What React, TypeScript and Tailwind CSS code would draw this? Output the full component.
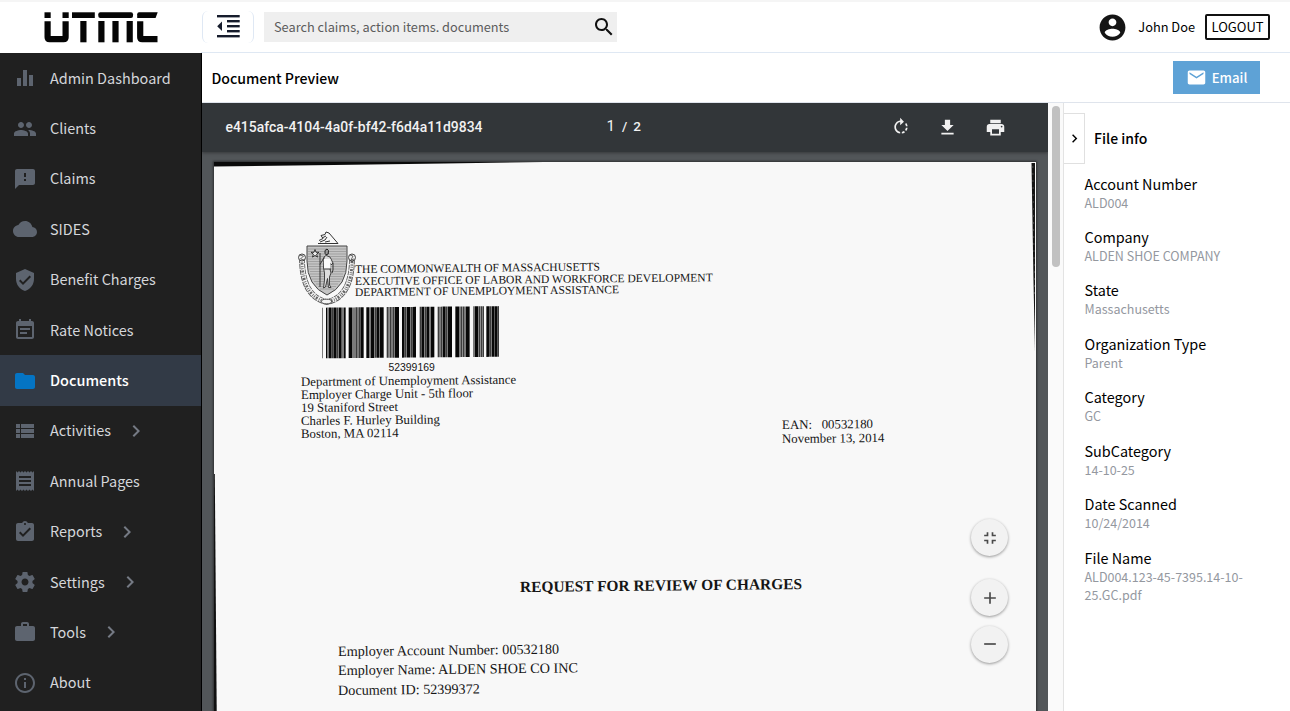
import React from 'react';

const ICONS = {
  bars: 'M10 20h4V4h-4v16zm-6 0h4v-8H4v8zM16 9v11h4V9h-4z',
  people:
    'M16 11c1.66 0 2.99-1.34 2.99-3S17.66 5 16 5c-1.66 0-3 1.34-3 3s1.34 3 3 3zm-8 0c1.66 0 2.99-1.34 2.99-3S9.66 5 8 5C6.34 5 5 6.34 5 8s1.34 3 3 3zm0 2c-2.33 0-7 1.17-7 3.5V19h14v-2.5c0-2.33-4.67-3.5-7-3.5zm8 0c-.29 0-.62.02-.97.05 1.16.84 1.97 1.97 1.97 3.45V19h6v-2.5c0-2.33-4.67-3.5-7-3.5z',
  feedback: 'M20 2H4c-1.1 0-1.99.9-1.99 2L2 22l4-4h14c1.1 0 2-.9 2-2V4c0-1.1-.9-2-2-2zm-7 12h-2v-2h2v2zm0-4h-2V6h2v4z',
  cloud: 'M19.35 10.04C18.67 6.59 15.64 4 12 4 9.11 4 6.6 5.64 5.35 8.04 2.34 8.36 0 10.91 0 14c0 3.31 2.69 6 6 6h13c2.76 0 5-2.24 5-5 0-2.64-2.05-4.78-4.65-4.96z',
  shield: 'M12 1L3 5v6c0 5.55 3.84 10.74 9 12 5.16-1.26 9-6.45 9-12V5l-9-4zm-2 16l-4-4 1.41-1.41L10 14.17l6.59-6.59L18 9l-8 8z',
  note: 'M17 10H7v2h10v-2zm2-7h-1V1h-2v2H8V1H6v2H5c-1.11 0-1.99.9-1.99 2L3 19c0 1.1.89 2 2 2h14c1.1 0 2-.9 2-2V5c0-1.1-.9-2-2-2zm0 16H5V8h14v11zm-5-5H7v2h7v-2z',
  folder: 'M10 4H4c-1.1 0-1.99.9-1.99 2L2 18c0 1.1.9 2 2 2h16c1.1 0 2-.9 2-2V8c0-1.1-.9-2-2-2h-8l-2-2z',
  list: 'M3 9h4V5H3v4zm0 5h4v-4H3v4zm0 5h4v-4H3v4zm5 0h13v-4H8v4zm0-5h13v-4H8v4zM8 5v4h13V5H8z',
  receipt: 'M18 17H6v-2h12v2zm0-4H6v-2h12v2zm0-4H6V7h12v2zM3 22l1.5-1.5L6 22l1.5-1.5L9 22l1.5-1.5L12 22l1.5-1.5L15 22l1.5-1.5L18 22l1.5-1.5L21 22V2l-1.5 1.5L18 2l-1.5 1.5L15 2l-1.5 1.5L12 2l-1.5 1.5L9 2 7.5 3.5 6 2 4.5 3.5 3 2v20z',
  clipboard:
    'M19 3h-4.18C14.4 1.84 13.3 1 12 1c-1.3 0-2.4.84-2.82 2H5c-1.1 0-2 .9-2 2v14c0 1.1.9 2 2 2h14c1.1 0 2-.9 2-2V5c0-1.1-.9-2-2-2zm-7 0c.55 0 1 .45 1 1s-.45 1-1 1-1-.45-1-1 .45-1 1-1zm-2 14l-4-4 1.41-1.41L10 14.17l6.59-6.59L18 9l-8 8z',
  gear: 'M19.43 12.98c.04-.32.07-.64.07-.98s-.03-.66-.07-.98l2.11-1.65c.19-.15.24-.42.12-.64l-2-3.46c-.12-.22-.39-.3-.61-.22l-2.49 1c-.52-.4-1.08-.73-1.69-.98l-.38-2.65C14.46 2.18 14.25 2 14 2h-4c-.25 0-.46.18-.49.42l-.38 2.65c-.61.25-1.17.59-1.69.98l-2.49-1c-.23-.09-.49 0-.61.22l-2 3.46c-.13.22-.07.49.12.64l2.11 1.65c-.04.32-.07.65-.07.98s.03.66.07.98l-2.11 1.65c-.19.15-.24.42-.12.64l2 3.46c.12.22.39.3.61.22l2.49-1c.52.4 1.08.73 1.69.98l.38 2.65c.03.24.24.42.49.42h4c.25 0 .46-.18.49-.42l.38-2.65c.61-.25 1.17-.59 1.69-.98l2.49 1c.23.09.49 0 .61-.22l2-3.46c.12-.22.07-.49-.12-.64l-2.11-1.65zM12 15.5c-1.93 0-3.5-1.57-3.5-3.5s1.57-3.5 3.5-3.5 3.5 1.57 3.5 3.5-1.57 3.5-3.5 3.5z',
  work: 'M20 6h-4V4c0-1.11-.89-2-2-2h-4c-1.11 0-2 .89-2 2v2H4c-1.11 0-1.99.89-1.99 2L2 19c0 1.11.89 2 2 2h16c1.11 0 2-.89 2-2V8c0-1.11-.89-2-2-2zm-6 0h-4V4h4v2z',
  info: 'M11 17h2v-6h-2v6zm1-15C6.48 2 2 6.48 2 12s4.48 10 10 10 10-4.48 10-10S17.52 2 12 2zm0 18c-4.41 0-8-3.59-8-8s3.59-8 8-8 8 3.59 8 8-3.59 8-8 8zM11 9h2V7h-2v2z',
  chevron: 'M10 6L8.59 7.41 13.17 12l-4.58 4.59L10 18l6-6z',
  search:
    'M15.5 14h-.79l-.28-.27C15.41 12.59 16 11.11 16 9.5 16 5.91 13.09 3 9.5 3S3 5.91 3 9.5 5.91 16 9.5 16c1.61 0 3.09-.59 4.23-1.57l.27.28v.79l5 4.99L20.49 19l-4.99-5zm-6 0C7.01 14 5 11.99 5 9.5S7.01 5 9.5 5 14 7.01 14 9.5 11.99 14 9.5 14z',
  account:
    'M12 2C6.48 2 2 6.48 2 12s4.48 10 10 10 10-4.48 10-10S17.52 2 12 2zm0 3c1.66 0 3 1.34 3 3s-1.34 3-3 3-3-1.34-3-3 1.34-3 3-3zm0 14.2c-2.5 0-4.71-1.28-6-3.22.03-1.99 4-3.08 6-3.08 1.99 0 5.97 1.09 6 3.08-1.29 1.94-3.5 3.22-6 3.22z',
  mail: 'M20 4H4c-1.1 0-1.99.9-1.99 2L2 18c0 1.1.9 2 2 2h16c1.1 0 2-.9 2-2V6c0-1.1-.9-2-2-2zm0 4l-8 5-8-5V6l8 5 8-5v2z',
  rotate:
    'M15.55 5.55L11 1v3.07C7.06 4.56 4 7.92 4 12s3.05 7.44 7 7.93v-2.02c-2.84-.48-5-2.94-5-5.91s2.16-5.43 5-5.91V10l4.55-4.45zM19.93 11c-.17-1.39-.72-2.73-1.62-3.89l-1.42 1.42c.54.75.88 1.6 1.02 2.47h2.02zM13 17.9v2.02c1.39-.17 2.74-.71 3.9-1.61l-1.44-1.44c-.75.54-1.59.89-2.46 1.03zm3.89-2.42l1.42 1.41c.9-1.16 1.45-2.5 1.62-3.89h-2.02c-.14.87-.48 1.72-1.02 2.48z',
  download: 'M19 9h-4V3H9v6H5l7 7 7-7zM5 18v2h14v-2H5z',
  print: 'M19 8H5c-1.66 0-3 1.34-3 3v6h4v4h12v-4h4v-6c0-1.66-1.34-3-3-3zm-3 11H8v-5h8v5zm3-7c-.55 0-1-.45-1-1s.45-1 1-1 1 .45 1 1-.45 1-1 1zm-1-9H6v4h12V3z',
  fit: 'M5 16h3v3h2v-5H5v2zm3-8H5v2h5V5H8v3zm6 11h2v-3h3v-2h-5v5zm2-11V5h-2v5h5V8h-3z',
  plus: 'M19 13h-6v6h-2v-6H5v-2h6V5h2v6h6v2z',
  minus: 'M19 13H5v-2h14v2z',
};

type IconName = keyof typeof ICONS;

function Icon({ name, className }: { name: IconName; className: string }) {
  return (
    <svg viewBox="0 0 24 24" fill="currentColor" className={`shrink-0 ${className}`} aria-hidden="true">
      <path d={ICONS[name]} />
    </svg>
  );
}

const NAV: { label: string; icon: IconName; more?: boolean; active?: boolean }[] = [
  { label: 'Admin Dashboard', icon: 'bars' },
  { label: 'Clients', icon: 'people' },
  { label: 'Claims', icon: 'feedback' },
  { label: 'SIDES', icon: 'cloud' },
  { label: 'Benefit Charges', icon: 'shield' },
  { label: 'Rate Notices', icon: 'note' },
  { label: 'Documents', icon: 'folder', active: true },
  { label: 'Activities', icon: 'list', more: true },
  { label: 'Annual Pages', icon: 'receipt' },
  { label: 'Reports', icon: 'clipboard', more: true },
  { label: 'Settings', icon: 'gear', more: true },
  { label: 'Tools', icon: 'work', more: true },
  { label: 'About', icon: 'info' },
];

const FILE_INFO = [
  ['Account Number', 'ALD004'],
  ['Company', 'ALDEN SHOE COMPANY'],
  ['State', 'Massachusetts'],
  ['Organization Type', 'Parent'],
  ['Category', 'GC'],
  ['SubCategory', '14-10-25'],
  ['Date Scanned', '10/24/2014'],
  ['File Name', 'ALD004.123-45-7395.14-10-25.GC.pdf'],
];

function Logo() {
  return (
    <svg viewBox="0 0 114 31" className="h-[31px] w-[114px]" role="img" aria-label="UTMC">
      <g fill="#050505">
        <rect x="0.5" y="0.3" width="6.2" height="5.7" />
        <rect x="18.5" y="0.3" width="6.2" height="5.7" />
        <rect x="28" y="0.3" width="22.8" height="5.7" />
        <rect x="36.3" y="9" width="6.2" height="21.3" />
        <rect x="54.3" y="0.3" width="34.7" height="5.7" rx="2" />
        <rect x="54.3" y="9" width="6.2" height="21.3" />
        <rect x="68.4" y="9" width="6.2" height="21.3" />
        <rect x="82.6" y="9" width="6.2" height="21.3" />
      </g>
      <path d="M3.6 9.3V25.2Q3.6 27.2 5.6 27.2H19.6Q21.6 27.2 21.6 25.2V9.3" fill="none" stroke="#050505" strokeWidth="6.2" />
      <path d="M96.2 9.3V25.2Q96.2 27.2 98.2 27.2H113.5" fill="none" stroke="#050505" strokeWidth="6.2" />
      <path d="M95 .3H113.7L111.6 6H93.2V2.3Q93.4 .3 95 .3Z" fill="#050505" />
    </svg>
  );
}

function OutdentIcon() {
  return (
    <svg viewBox="0 0 23 23" className="h-[23px] w-[23px]" fill="#161c2c" aria-hidden="true">
      <rect y="0" width="22.7" height="2.4" />
      <rect x="10" y="5" width="12.7" height="2.4" />
      <rect x="10" y="10" width="12.7" height="2.4" />
      <rect x="10" y="15" width="12.7" height="2.4" />
      <rect y="20" width="22.7" height="2.4" />
      <path d="M5 6.6V16L.2 11.3Z" />
    </svg>
  );
}

function Seal() {
  return (
    <svg viewBox="0 0 58 74" className="h-[74px] w-[58px] shrink-0" fill="none" stroke="#333" aria-hidden="true">
      <path d="M20 12.5h20M21 9.5l4-2-2-3 4-1 1-2.5 3 1 9 10.500M22 11l5-2 2-3M27 11l5-1M24 7l4-2" strokeWidth="1" />
      <path d="M4 27Q4 66 29 71Q54 66 54 27" stroke="#5a5a5a" strokeWidth="5.800" strokeDasharray="5 0.800" />
      <path d="M4 27Q4 66 29 71Q54 66 54 27" stroke="#f3f3f3" strokeWidth="4" />
      <path d="M4 29Q4 66 29 71Q54 66 54 29" stroke="#666" strokeWidth="2.800" strokeDasharray="1 1.300 2 1.500 0.800 1.200" />
      <circle cx="4" cy="26.500" r="3.500" fill="#eee" strokeWidth="0.900" />
      <path d="M1.500 24l4 1-3 3 4 1" strokeWidth="0.700" />
      <circle cx="54" cy="26.500" r="3.500" fill="#eee" strokeWidth="0.900" />
      <path d="M52 24l3 1-2 4 3-1" strokeWidth="0.700" />
      <ellipse cx="28.500" cy="70.500" rx="5" ry="2.300" fill="#f4f4f4" strokeWidth="0.800" />
      <path d="M9 15H49V30Q49 55 29 64Q9 55 9 30Z" fill="#c4c4c4" stroke="#444" strokeWidth="1" />
      <path
        d="M10 18h38M10 20.500h38M10 23h38M10 25.500h38M10 28h38M10 30.500h38M10 33h38M10 35.500h38M11 38h36M12 40.500h35M12 43h33M13 45.500h32M14 48h30M16 50.500h26M18 53h22M20 55.500h18M22 58h14"
        stroke="#929292"
        strokeWidth="0.700"
      />
      <path d="M17 18.500l1 2.800h3l-2.400 1.900.9 2.900-2.500-1.700-2.500 1.700.9-2.900L13 21.300h3z" fill="#eee" stroke="#222" strokeWidth="0.900" />
      <path d="M27 19.500l2-1.500 1.500 1.500-.3 3.500-2.200.800-1-1.500z" fill="#999" stroke="#222" strokeWidth="1" />
      <path d="M26 26l2-1.500 4 1.500 3 6-2 2-1-2v6l1 4-1.500 4v8l1.500 2.500h-2.500l-1-9-2 8.500-2 1 1-8v-7l-1-5z" fill="#ddd" stroke="#333" strokeWidth="0.900" />
      <path d="M26 28h6.500v10H26z" fill="#fafafa" stroke="none" />
      <path d="M22 22v34M26 26.500l-4 7M35 32v7l-1 3M26 38h7" stroke="#333" strokeWidth="1" />
    </svg>
  );
}

/* Each entry is [left, width, shade], in thirds of a pixel. */
const BARS: [number, number, 0 | 1][] = [
  [0, 2, 1], [12, 4, 0], [17, 3, 1], [21, 8, 0], [30, 3, 1], [34, 10, 0], [45, 4, 1], [50, 9, 0], [61, 4, 1], [66, 5, 0],
  [80, 10, 0], [91, 4, 1], [97, 4, 1], [102, 3, 1], [106, 4, 1], [111, 3, 1], [115, 10, 0],
  [133, 8, 0], [142, 4, 1], [147, 10, 0], [158, 4, 1], [163, 9, 0], [173, 12, 0],
  [194, 4, 1], [199, 3, 1], [203, 4, 1], [208, 4, 1], [213, 4, 1], [218, 13, 0],
  [240, 8, 0], [249, 4, 1], [254, 10, 0], [265, 5, 1], [271, 11, 0],
  [293, 4, 1], [298, 9, 0], [308, 4, 1], [313, 8, 0], [322, 4, 1], [327, 10, 0],
  [347, 4, 1], [352, 4, 1], [357, 4, 1], [362, 9, 0], [372, 5, 1], [378, 12, 0],
  [400, 11, 0], [412, 4, 1], [417, 4, 1], [422, 4, 1], [427, 4, 1], [432, 11, 0],
  [454, 4, 1], [459, 10, 0], [470, 5, 1], [476, 4, 1], [481, 5, 1],
  [493, 10, 0], [504, 4, 1], [509, 9, 0], [519, 8, 0], [528, 3, 1],
];

function Barcode() {
  return (
    <svg viewBox="0 0 534 159" className="h-[53px] w-[178px]" preserveAspectRatio="none" role="img" aria-label="Barcode">
      <g transform="skewY(-0.5)">
        {BARS.map(([x, w, shade]) => (
          <rect key={x} x={x} y={5} width={w} height={152} fill={shade ? '#3c3c3c' : '#080808'} />
        ))}
      </g>
    </svg>
  );
}

function Line({ children, className = '' }: { children: React.ReactNode; className?: string }) {
  return <p className={`w-max origin-left rotate-[-0.6deg] whitespace-pre ${className}`}>{children}</p>;
}

function ScannedPage() {
  return (
    <div className="relative h-[560px] w-[822px] overflow-hidden bg-[#f8f8f8] font-['Liberation_Serif',serif] text-[#151515]">
      <svg className="absolute inset-0 h-[560px] w-[822px]" viewBox="0 0 822 560" aria-hidden="true">
        <path d="M0 0H330L230 1.500L120 3L0 4.600Z" fill="#0a0a0a" />
        <path d="M817.500 1H821V190L819.500 120Z" fill="#141414" />
        <path d="M818.800 4l.9 70 .9 60" stroke="#777" strokeWidth="0.500" strokeDasharray="2 5" fill="none" />
        <path d="M0 312H.8L2.800 560H0Z" fill="#111" />
      </svg>
      <div className="relative pt-[69px]">
        <div className="ml-[84px] flex h-[75px] items-start">
          <Seal />
          <div className="-ml-[1.5px] mt-[33px] text-[11.55px] leading-[11.7px]">
            <Line>THE COMMONWEALTH OF MASSACHUSETTS</Line>
            <Line>EXECUTIVE OFFICE OF LABOR AND WORKFORCE DEVELOPMENT</Line>
            <Line>DEPARTMENT OF UNEMPLOYMENT ASSISTANCE</Line>
          </div>
        </div>
        <div className="ml-[108px] h-[53px]">
          <Barcode />
        </div>
        <p className="ml-[174.5px] h-[17px] pt-[2px] font-['Liberation_Sans',sans-serif] text-[10.4px] leading-[14px]">52399169</p>
        <div className="ml-[87px] mt-[-1px] flex h-[70px] items-start text-[12.85px]">
          <div className="w-[480.5px] pt-px leading-[12.9px]">
            <Line>Department of Unemployment Assistance</Line>
            <Line>Employer Charge Unit - 5th floor</Line>
            <Line>19 Staniford Street</Line>
            <Line>Charles F. Hurley Building</Line>
            <Line>Boston, MA 02114</Line>
          </div>
          <div className="pt-[43px] leading-[14px]">
            <Line>EAN:   00532180</Line>
            <Line>November 13, 2014</Line>
          </div>
        </div>
        <Line className="ml-[306px] mt-[132px] text-[15.4px] leading-[20px] font-bold">REQUEST FOR REVIEW OF CHARGES</Line>
        <div className="ml-[124px] mt-[45px] text-[14.2px] leading-[19.3px]">
          <Line>Employer Account Number: 00532180</Line>
          <Line>Employer Name: ALDEN SHOE CO INC</Line>
          <Line>Document ID: 52399372</Line>
        </div>
      </div>
    </div>
  );
}

function RoundButton({ icon, label }: { icon: IconName; label: string }) {
  return (
    <button
      aria-label={label}
      className="flex h-[37px] w-[37px] items-center justify-center rounded-full bg-[#f2f2f2] text-[#4a4a4a] shadow-[0_1px_3px_rgba(0,0,0,0.4)]"
    >
      <Icon name={icon} className="h-[20px] w-[20px]" />
    </button>
  );
}

function Viewer() {
  return (
    <section className="relative flex h-[608px] w-[846px] shrink-0 flex-col overflow-hidden bg-[#525659]">
      <div className="z-10 flex h-[49px] w-full shrink-0 items-center bg-[#323639] pl-[23.5px] font-['Roboto',sans-serif] text-[#f1f1f1] shadow-[0_1px_3px_rgba(0,0,0,0.35)]">
        <span className="w-[381px] text-[13.93px] font-medium">e415afca-4104-4a0f-bf42-f6d4a11d9834</span>
        <span className="flex w-[284px] items-baseline pb-[2px] text-[13.5px] font-medium">
          <span className="mr-[7px] text-[15px] font-normal">1</span>
          <span className="mr-[6px]">/</span>
          <span>2</span>
        </span>
        <span className="flex gap-[26.500px] pb-px">
          <Icon name="rotate" className="h-[20px] w-[20px]" />
          <Icon name="download" className="h-[21px] w-[21px]" />
          <Icon name="print" className="h-[21px] w-[21px]" />
        </span>
      </div>
      <div className="ml-[12px] mt-[10px] w-[822px] shadow-[0_0_2px_1px_rgba(0,0,0,0.45)]">
        <ScannedPage />
      </div>
      <div className="absolute top-[416px] left-[769px] z-10 flex flex-col">
        <RoundButton icon="fit" label="Fit to page" />
        <div className="mt-[23px] flex flex-col gap-[9.500px]">
          <RoundButton icon="plus" label="Zoom in" />
          <RoundButton icon="minus" label="Zoom out" />
        </div>
      </div>
    </section>
  );
}

export default function App() {
  return (
    <div className="flex h-[711px] w-[1290px] flex-col overflow-hidden bg-white font-['Noto_Sans_CJK_SC',sans-serif] text-[#111]">
      <header className="flex h-[53px] shrink-0 border-t-2 border-[#f5f5f5]">
        <div className="flex w-[201px] justify-center pt-[9.500px]">
          <Logo />
        </div>
        <div className="flex flex-1 border-b border-[#dfe8f3]">
          <div className="ml-px mt-[9px] flex h-[32px] w-[52px] justify-center rounded-md border-x border-[#dfe8f4] pt-[4px]">
            <OutdentIcon />
          </div>
          <div className="ml-[10px] mt-[10px] flex h-[30px] w-[353px] items-center justify-between bg-[#efefef] pl-[10px] pr-px">
            <span className="text-[12.75px] leading-[20px] text-[#5c5c5c]">Search claims, action items. documents</span>
            <Icon name="search" className="h-[24px] w-[24px] text-[#111]" />
          </div>
          <div className="ml-auto mr-[20px] flex h-[50px] items-center">
            <Icon name="account" className="h-[31px] w-[31px] text-[#151515]" />
            <span className="ml-[10px] text-[12.8px] leading-[20px] text-black">John Doe</span>
            <button className="ml-[10px] flex h-[26px] w-[65px] items-center justify-center rounded-[2px] border-2 border-[#111] text-[13px] leading-[20px] text-black">
              LOGOUT
            </button>
          </div>
        </div>
      </header>

      <div className="flex flex-1">
        <nav className="h-[658px] w-[202px] shrink-0 border-r border-black bg-[#202020]">
          {NAV.map((item) => (
            <a
              key={item.label}
              className={`flex h-[50.4px] items-center pl-[13px] text-[14.45px] leading-[22px] ${
                item.active ? 'bg-[#323a46] text-[14.2px] font-medium text-white' : 'text-[#d4d6da]'
              }`}
            >
              <Icon name={item.icon} className={`h-[24px] w-[24px] ${item.active ? 'text-[#0474c4]' : 'text-[#5d646f]'}`} />
              <span className="-mt-px ml-[13px]">{item.label}</span>
              {item.more && <Icon name="chevron" className="ml-[13px] h-[24px] w-[24px] text-[#757a84]" />}
            </a>
          ))}
        </nav>

        <main className="flex w-[1088px] flex-col">
          <div className="flex h-[50px] shrink-0 items-center justify-between border-b border-[#dfe4ec] pr-[30px] pl-[9.500px]">
            <h1 className="text-[14.1px] leading-[22px] font-medium text-black">Document Preview</h1>
            <button className="flex h-[33px] w-[87px] items-center justify-center bg-[#5ea2d6] text-[13.200px] leading-[20px] font-medium text-white">
              <Icon name="mail" className="mr-[5px] h-[21px] w-[21px]" />
              Email
            </button>
          </div>
          <div className="flex flex-1">
            <Viewer />
            <div className="flex w-[15px] shrink-0 justify-center bg-[#fafafa] pt-[3px]">
              <div className="h-[161px] w-[8px] rounded-full bg-[#c1c1c1]" />
            </div>
            <aside className="flex flex-1 flex-col border-l border-[#e3e3e3]">
              <div className="mt-[10px] flex h-[51px] items-center">
                <button aria-label="Collapse" className="flex h-[51px] w-[21px] items-center justify-center border border-l-0 border-[#e0e0e0]">
                  <Icon name="chevron" className="h-[17px] w-[17px] text-black" />
                </button>
                <h2 className="-mt-[2px] ml-[9px] text-[14px] leading-[22px] font-medium text-black">File info</h2>
              </div>
              <dl className="mt-[9.5px] pl-[20.5px]">
                {FILE_INFO.map(([label, value]) => (
                  <div key={label} className="mb-[15.45px] w-[172px]">
                    <dt className="text-[14.4px] leading-[20px] text-black">{label}</dt>
                    <dd className="text-[12.5px] leading-[18px] text-[#94989f]">{value}</dd>
                  </div>
                ))}
              </dl>
            </aside>
          </div>
        </main>
      </div>
    </div>
  );
}
